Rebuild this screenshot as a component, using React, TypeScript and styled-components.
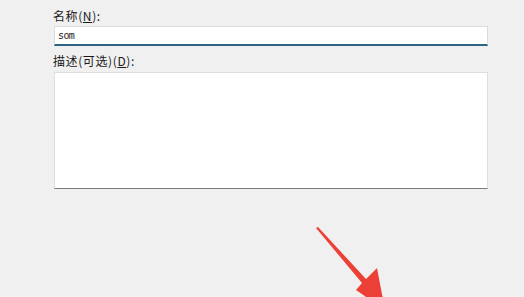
import React from "react";
import styled, { createGlobalStyle } from "styled-components";

const Global = createGlobalStyle`
  html, body { margin: 0; padding: 0; background: #f0f0f0; }
  body { width: 524px; height: 297px; overflow: hidden; }
`;

const Page = styled.div`
  position: relative;
  width: 524px;
  height: 297px;
  background: #f0f0f0;
  font-family: "Noto Sans CJK SC", "Noto Sans", sans-serif;
  color: #1a1a1a;
`;

const Form = styled.div`
  display: flex;
  flex-direction: column;
  padding: 8px 0 0 53px;
  width: 435px;
`;

const Label = styled.div<{ $gap: number }>`
  font-size: 12px;
  line-height: 16px;
  height: 16px;
  letter-spacing: 0.6px;
  margin-bottom: ${(p) => p.$gap}px;
  white-space: nowrap;
  u { text-decoration-thickness: 1px; text-underline-offset: 1px; }
`;

const TextInput = styled.div`
  box-sizing: border-box;
  height: 20px;
  margin-left: 1px;
  background: #ffffff;
  border: 1px solid #dcdcdc;
  border-bottom: 2px solid #2c6482;
  padding: 0 0 0 3px;
  display: flex;
  align-items: center;
  font-family: "DejaVu Sans Mono", monospace;
  font-size: 10px;
  letter-spacing: -0.6px;
  color: #222;
  margin-bottom: 7px;
`;

const TextArea = styled.div`
  box-sizing: border-box;
  height: 117px;
  margin-left: 1px;
  background: #ffffff;
  border: 1px solid #dedede;
  border-bottom: 1px solid #7c7c7c;
`;

const Arrow = styled.svg`
  position: absolute;
  left: 0;
  top: 0;
  pointer-events: none;
`;

export default function App() {
  return (
    <>
      <Global />
      <Page>
        <Form>
          <Label $gap={2}>
            名称(<u>N</u>):
          </Label>
          <TextInput>som</TextInput>
          <Label $gap={3}>
            描述(可选)(<u>D</u>):
          </Label>
          <TextArea />
        </Form>
        <Arrow width="524" height="297" viewBox="0 0 524 297">
          <polygon
            points="316,228 318,227 366,279 377,268 385,310 356,290 362,283"
            fill="#ec3f36"
          />
        </Arrow>
      </Page>
    </>
  );
}
